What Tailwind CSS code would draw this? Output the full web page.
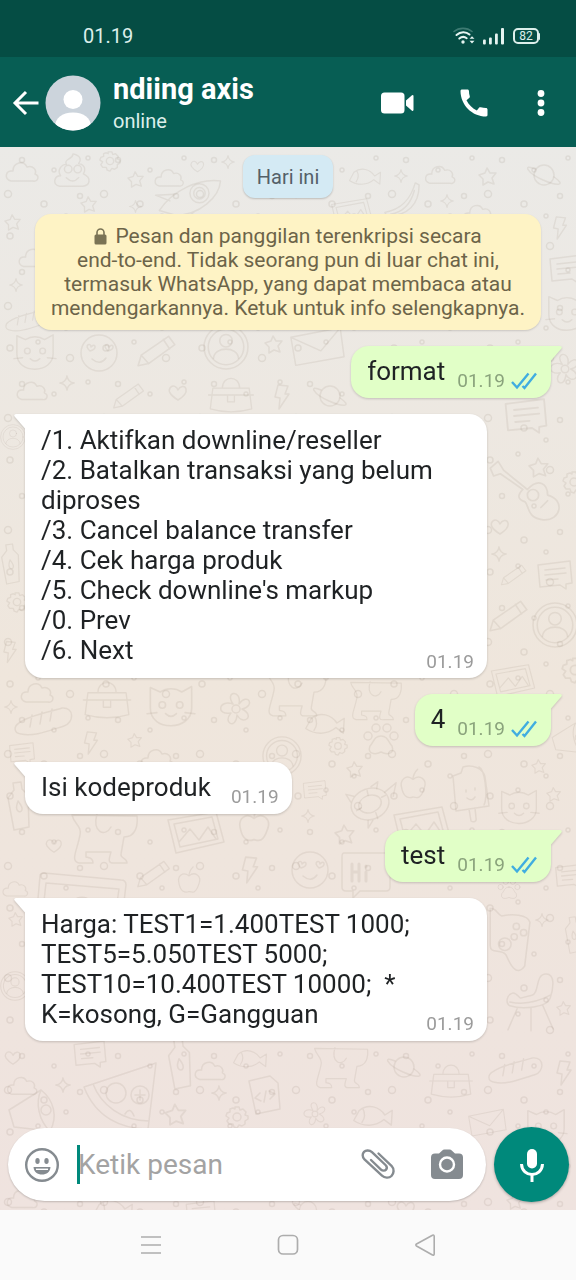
<!DOCTYPE html>
<html lang="id">
<head>
<meta charset="utf-8">
<meta name="viewport" content="width=device-width, initial-scale=1">
<title>ndiing axis</title>
<script src="https://cdn.jsdelivr.net/npm/@tailwindcss/browser@4"></script>
</head>
<body class="flex min-h-screen flex-col bg-[#efe7de] font-[Roboto,'Noto_Sans',sans-serif] text-[#1f2224]">

<!-- Status bar -->
<div class="flex h-[57px] items-end justify-between bg-[#054d44] pr-9 pb-[9px] pl-[83px] text-[#dcefeb]">
  <span class="text-[20px] leading-6">01.19</span>
  <div class="flex items-center gap-2 pb-[3px]">
    <svg class="h-[18px] w-[22px]" viewBox="0 0 22 18" fill="none" stroke="#e6f4f1" stroke-linecap="round" aria-label="Wi-Fi">
      <path d="M1 4.500C6 .3 14 .3 19 4.500" stroke="#3d7a72" stroke-width="1.600"/>
      <path d="M3.500 8C7.500 4.300 13 4.300 16.500 7.500" stroke-width="2"/>
      <path d="M6.300 11.600C8.700 9.500 11.500 9.500 13.700 11.200" stroke-width="2"/>
      <circle cx="10" cy="15" r="1.700" fill="#e6f4f1" stroke="none"/>
      <path d="M16.500 11.800 19 9.200 21.500 11.800ZM16.500 13.800 19 16.400 21.500 13.800Z" fill="#e6f4f1" stroke="none"/>
    </svg>
    <svg class="h-[18px] w-[22px]" viewBox="0 0 22 18" fill="#e6f4f1" aria-label="Sinyal"><rect x="0" y="12.500" width="2.800" height="5" rx="1"/><rect x="6" y="10.500" width="2.800" height="7" rx="1"/><rect x="12" y="6.500" width="2.800" height="11" rx="1"/><rect x="18" y="1" width="3" height="16.500" rx="1"/></svg>
    <div class="flex items-center">
      <span class="flex h-4 w-[26px] items-center justify-center rounded-[5px] border-2 border-[#dcefeb] text-[12px] leading-3">82</span>
      <span class="h-[7px] w-px rounded-r bg-[#dcefeb]"></span>
    </div>
  </div>
</div>

<!-- Conversation header -->
<header class="flex h-[90px] items-center bg-[#075e54] pt-[2px] pr-[23px] pl-3 text-white">
  <button class="flex items-center" aria-label="Kembali">
    <svg class="h-7 w-[28px]" viewBox="0 0 28 28" fill="none" stroke="currentColor" stroke-width="3"><path d="M26.500 14H3.500M14 3 3 14l11 11"/></svg>
  </button>
  <svg class="ml-[5px] size-14 shrink-0" viewBox="0 0 56 56" aria-label="Foto profil">
    <defs><clipPath id="face"><circle cx="28" cy="28" r="27.500"/></clipPath></defs>
    <circle cx="28" cy="28" r="27.500" fill="#ccd4dc"/>
    <g clip-path="url(#face)" fill="#fff"><circle cx="28" cy="24.500" r="9.500"/><path d="M10 52c0-9 7-14.500 18-14.500S46 43 46 52v6H10Z"/></g>
  </svg>
  <div class="ml-3 min-w-0 flex-1">
    <h1 class="truncate text-[29px] leading-8 font-bold">ndiing axis</h1>
    <p class="pt-1 text-[20px] leading-6 text-[#dcefeb]">online</p>
  </div>
  <button aria-label="Panggilan video"><svg class="h-[24px] w-[33px]" viewBox="0 0 33 24" fill="currentColor"><rect x="0" y="1.500" width="23.500" height="21" rx="3.500"/><path d="M25 9.500 31 4.200Q32.500 3.500 32.500 5.500V18.500Q32.500 20.500 31 19.700L25 14.500Z"/></svg></button>
  <button class="ml-[42px]" aria-label="Panggilan suara"><svg class="size-9" viewBox="0 0 24 24" fill="currentColor"><path d="M20.010 15.380c-1.230 0-2.420-.2-3.530-.56-.35-.12-.74-.03-1.010.24l-1.570 1.970c-2.830-1.350-5.480-3.900-6.890-6.830l1.950-1.660c.27-.28.35-.67.240-1.020-.37-1.110-.56-2.300-.56-3.530 0-.54-.45-.99-.99-.99H4.190C3.650 3 3 3.240 3 3.990 3 13.280 10.730 21 20.010 21c.71 0 .99-.63.990-1.180v-3.450c0-.54-.45-.99-.99-.99z"/></svg></button>
  <button class="ml-[37px]" aria-label="Menu lainnya"><svg class="h-8 w-6" viewBox="0 0 24 32" fill="currentColor"><circle cx="12" cy="6.500" r="3.400"/><circle cx="12" cy="16" r="3.400"/><circle cx="12" cy="25.500" r="3.400"/></svg></button>
</header>

<main class="relative isolate flex flex-1 flex-col overflow-hidden bg-linear-to-b from-[#ebeae7] via-[#efe6dc] to-[#efe3df]">
  <!-- Doodle wallpaper -->
  <svg class="absolute inset-0 -z-10 size-full" viewBox="0 147 576 1063" preserveAspectRatio="xMidYMin slice" fill="none" stroke="#7d6a5c" stroke-opacity=".11" stroke-width="1.500" stroke-linejoin="round" stroke-linecap="round" aria-hidden="true">
    <defs>
      <pattern id="dots" width="96" height="112" patternUnits="userSpaceOnUse"><g stroke="#7d6a5c" stroke-opacity=".12" fill="none"><circle cx="10" cy="12" r="3"/><circle cx="38" cy="6" r="2"/><circle cx="70" cy="22" r="3.500"/><circle cx="88" cy="46" r="2"/><circle cx="22" cy="48" r="2.500"/><circle cx="54" cy="58" r="2"/><circle cx="8" cy="82" r="3.500"/><circle cx="44" cy="92" r="3"/><circle cx="80" cy="84" r="2.500"/><circle cx="66" cy="104" r="2"/></g></pattern>
      <symbol id="cloud" viewBox="0 0 36 26" overflow="visible"><path d="M6 22C-1 20 0 11 8 12 8 3 19 1 22 8c6-2 10 3 8 7 5 2 3 8-2 7Z"/></symbol>
      <symbol id="star" viewBox="0 0 20 20" overflow="visible"><path d="m9 2 3 5 6 0-4 5 2 6-6-2-5 3 0-6-4-4 6-2Z"/></symbol>
      <symbol id="spark" viewBox="0 0 20 20" overflow="visible"><path d="M10 2q1 7 8 8-7 1-8 8-1-7-8-8 7-1 8-8Z"/></symbol>
      <symbol id="heart" viewBox="0 0 20 18" overflow="visible"><path d="M10 16C2 11 0 7 2 4c3-4 7-1 8 2 2-4 7-5 8-1 1 4-3 8-8 11Z"/></symbol>
      <symbol id="gear" viewBox="0 0 24 24" overflow="visible"><circle cx="12" cy="12" r="4"/><path d="m10 2 4 0 1 3 3-1 3 3-1 3 3 1 0 3-3 2 0 3-3 2-3-1-2 3-3-1-1-3-4 0-2-3 2-3-3-2 1-3 3-1 0-3 3-1 2 1Z"/></symbol>
      <symbol id="planet" viewBox="0 0 36 28" overflow="visible"><circle cx="18" cy="14" r="10"/><path d="M9 8C-4 2 1 12 17 19s23 5 11-3"/></symbol>
      <symbol id="rocket" viewBox="0 0 76 44" overflow="visible"><path d="M8 34C22 13 49 0 72 3 71 20 50 39 25 39ZM24 17 4 18l15 6M45 35 34 44l-8-5"/><circle cx="50" cy="16" r="10"/><circle cx="50" cy="16" r="6"/></symbol>
      <symbol id="poop" viewBox="0 0 40 40" overflow="visible"><path d="M21 2c10 2 8 8 6 10 8 2 7 8 5 11 9 4 7 13-1 13H7c-8-1-6-11 1-11-4-6 1-12 6-12-3-6 7-5 7-11Z"/><circle cx="16" cy="18" r="4"/><circle cx="26" cy="18" r="4"/><path d="M14 27q7 7 13 0"/></symbol>
      <symbol id="mail" viewBox="0 0 60 44" overflow="visible"><path d="M3 12 54 2l4 30-50 9ZM3 12l31 14L54 2"/></symbol>
      <symbol id="banana" viewBox="0 0 40 40" overflow="visible"><path d="m34 2 4 2c0 20-11 33-34 33l-2-4C20 30 29 19 34 2Zm-1 8C29 25 20 33 8 35"/></symbol>
      <symbol id="note" viewBox="0 0 38 30" overflow="visible"><path d="m2 5 32-4 2 22-6 1 0 5-6-4-20 2ZM9 10l20-2M9 15l21-2M10 20l12-1"/></symbol>
      <symbol id="person" viewBox="0 0 44 44" overflow="visible"><circle cx="22" cy="22" r="21"/><circle cx="22" cy="22" r="17"/><circle cx="22" cy="16" r="6"/><path d="M10 33c1-12 23-12 24 0"/></symbol>
      <symbol id="guitar" viewBox="0 0 64 60" overflow="visible"><path d="m2 7 7-6 5 8 21 17c10-11 18-5 18 5 16 4 12 23-4 22-15-2-12-12-16-16-9-3-5-8-2-11L11 12 5 14Z"/><circle cx="40" cy="31" r="5"/><path d="m47 42 6-6"/></symbol>
      <symbol id="pencil" viewBox="0 0 40 32" overflow="visible"><path d="m2 30 3-10L31 2l6 8-25 18ZM5 20l7 8M26 5l6 9"/></symbol>
      <symbol id="bread" viewBox="0 0 60 32" overflow="visible"><path d="M5 17C15 9 36 6 48 2c13-1 12 15 2 18C34 25 19 31 7 28-1 27 0 20 5 17ZM16 21l2-12M26 18l2-12M36 15l2-12"/></symbol>
      <symbol id="flower" viewBox="0 0 36 36" overflow="visible"><circle cx="18" cy="18" r="4"/><path d="M15 13c-9-13 9-15 6 0 9-12 17 2 3 5 14 7 1 17-5 6-1 15-15 8-6-2-15 3-13-14 2-9Z"/></symbol>
      <symbol id="dog" viewBox="0 0 66 54" overflow="visible"><path d="M3 3c2 9 10 11 8 20-3 16-10 26-1 28h14c0-5-3-5-7-6l0-5 25 0c-2 7-4 12 4 11h12c0-6-7-4-6-9l3-17c12 0 14-12 13-21ZM28 2c-5 18 8 24 14 13"/></symbol>
      <symbol id="photo" viewBox="0 0 60 44" overflow="visible"><path d="M2 9 50 1l8 30-48 11ZM8 13l38-7 6 22-38 8ZM13 31l11-13 9 11 9-13 8 12"/></symbol>
      <symbol id="bottle" viewBox="0 0 24 50" overflow="visible"><path d="m7 2 8-1 1 7 6 6 1 32-15 3L2 17l6-8ZM12 20c8 10 2 12 0 10s-2-4 0-10Z"/></symbol>
      <symbol id="apple" viewBox="0 0 28 34" overflow="visible"><path d="M14 12c7-6 16 0 12 10-4 12-8 10-12 9-5 2-10 0-12-9-3-10 5-16 12-10Zm0 0q0-6 5-11"/></symbol>
      <symbol id="board" viewBox="0 0 92 40" overflow="visible"><path d="M2 38 5 4q0-3 4-3l77 7q5 0 5 5l-3 25M8 38l3-27 73 6-3 21M35 38c1-17 23-17 24 0"/></symbol>
      <symbol id="turtle" viewBox="0 0 56 50" overflow="visible"><ellipse cx="27" cy="25" rx="20" ry="16" transform="rotate(-20 27 25)"/><ellipse cx="27" cy="25" rx="12" ry="9" transform="rotate(-20 27 25)"/><path d="m42 13 12-10-3 14M10 17 2 15l5 8M25 42l0 8 5-8M34 9l1-7-7 5M13 32l5-3M39 18l4-2M24 11l1 5M33 34l2 6"/></symbol>
      <symbol id="ice" viewBox="0 0 40 60" overflow="visible"><path d="m2 12 8-3 2-6c9-3 20 1 22 10l4 29-33 5ZM28 3c6 2 9 30 5 38M18 45l2 12c3 2 6 0 5-3l-1-10M15 26v2M24 24v2M16 34q5 4 8-1"/></symbol>
      <symbol id="smile" viewBox="0 0 38 38" overflow="visible"><circle cx="19" cy="19" r="18"/><path d="M10 17c-7-6 1-9 1-4 4-5 7 2-1 4ZM28 17c-7-6 1-9 1-4 4-5 7 2-1 4ZM12 25q8 7 14-1"/></symbol>
      <symbol id="pad" viewBox="0 0 44 64" overflow="visible"><path d="M4 2c6-1 6 5 11 7 9-2 25-2 27 6l-5 42c-8 11-14-2-18-11-5-6-15 0-15-9Z"/><circle cx="18" cy="36" r="6"/><circle cx="29" cy="19" r="3"/><circle cx="36" cy="25" r="3"/><circle cx="27" cy="29" r="3"/></symbol>
      <symbol id="chair" viewBox="0 0 52 64" overflow="visible"><path d="M6 24c4-2 7 4 9 5l12-3c8-2 3-21 14-22 11-1 8 16 5 25-3 10-29 12-42 8-5-3-3-11 2-13ZM12 39 2 62M26 39l0 24M38 36l11 25M4 33c14 3 29 0 42-7"/></symbol>
      <symbol id="pizza" viewBox="0 0 76 70" overflow="visible"><path d="M2 26 74 2 66 68C40 68 14 57 2 26ZM11 23C19 44 40 60 67 60"/><circle cx="34" cy="32" r="10"/><circle cx="58" cy="34" r="9"/><path d="M58 29v10M53 34h10M43 53q5-8 9 2"/></symbol>
      <symbol id="code" viewBox="0 0 34 40" overflow="visible"><path d="m2 6 21-5 8 7 2 26-24 5ZM13 18l-5 5 6 3M22 16l6 3-5 5M19 16l-2 11"/></symbol>
      <symbol id="cat" viewBox="0 0 46 44" overflow="visible"><path d="M4 6 13 10c6-4 14-4 20 0l9-5 0 20c0 21-38 22-38 0Z"/><circle cx="15" cy="22" r="3"/><circle cx="31" cy="22" r="3"/><path d="M18 30q5 5 10 0M1 30l9-1M36 29l9 1"/></symbol>
      <symbol id="bag" viewBox="0 0 56 44" overflow="visible"><path d="M7 14h42l3 24q-24 7-48 0ZM18 14c0-15 20-15 20 0M2 22h52M24 22v8h8v-8"/></symbol>
      <symbol id="bolt" viewBox="0 0 16 26" overflow="visible"><path d="m4 1 10 1-3 8 4 0L5 25l1-11-5-1Z"/></symbol>
      <symbol id="horn" viewBox="0 0 50 48" overflow="visible"><path d="M3 22 35 2c13 10 17 27 9 41L8 39ZM35 2c-6 13-2 31 9 41"/><circle cx="40" cy="22" r="5"/></symbol>
      <symbol id="paw" viewBox="0 0 36 34" overflow="visible"><circle cx="5" cy="14" r="4"/><circle cx="13" cy="6" r="4"/><circle cx="24" cy="6" r="4"/><circle cx="31" cy="14" r="4"/><path d="M18 14c7 0 7 6 11 10 3 8-5 9-11 6-6 3-14 2-11-6 4-4 4-10 11-10Z"/></symbol>
      <symbol id="fish" viewBox="0 0 46 24" overflow="visible"><path d="M2 18 8 7C18-1 30 3 36 12l8-5-1 16-8-6C26 25 12 25 2 18ZM12 5q4 8-1 15"/></symbol>
    </defs>
    <rect x="0" y="147" width="576" height="1063" fill="url(#dots)" stroke="none"/>
    <use href="#cloud" x="5" y="159" width="36" height="26"/><use href="#poop" x="52" y="152" width="40" height="38"/><use href="#gear" x="99" y="150" width="22" height="22"/><use href="#star" x="127" y="170" width="18" height="18"/><use href="#cloud" x="154" y="166" width="32" height="24"/><use href="#heart" x="190" y="159" width="15" height="15"/><use href="#rocket" x="150" y="178" width="76" height="42"/><use href="#spark" x="220" y="154" width="16" height="16"/><use href="#star" x="80" y="195" width="18" height="18"/><use href="#star" x="4" y="213" width="18" height="18"/><use href="#spark" x="128" y="199" width="15" height="15"/>
    <use href="#fish" x="348" y="164" width="34" height="24"/><use href="#spark" x="393" y="168" width="16" height="16"/><use href="#cloud" x="424" y="163" width="34" height="24"/><use href="#star" x="478" y="166" width="20" height="20"/><use href="#planet" x="526" y="161" width="36" height="28"/><use href="#banana" x="382" y="181" width="40" height="38"/><use href="#spark" x="439" y="193" width="16" height="16"/><use href="#photo" x="326" y="198" width="52" height="32"/><use href="#cloud" x="462" y="202" width="34" height="24"/><use href="#bolt" x="551" y="216" width="18" height="24"/>
    <use href="#cloud" x="18" y="245" width="34" height="26"/><use href="#spark" x="8" y="277" width="16" height="16"/><use href="#bread" x="5" y="302" width="46" height="38"/><use href="#note" x="548" y="252" width="38" height="34"/><use href="#cat" x="545" y="288" width="44" height="48"/><use href="#cat" x="12" y="330" width="46" height="42"/><use href="#smile" x="80" y="334" width="38" height="38"/><use href="#pencil" x="136" y="334" width="42" height="34"/><use href="#person" x="203" y="324" width="46" height="46"/><use href="#star" x="264" y="334" width="20" height="20"/><use href="#mail" x="288" y="325" width="58" height="44"/><use href="#flower" x="548" y="352" width="34" height="34"/>
    <use href="#spark" x="58" y="374" width="18" height="18"/><use href="#cloud" x="16" y="378" width="34" height="26"/><use href="#pencil" x="112" y="382" width="34" height="28"/><use href="#heart" x="168" y="384" width="20" height="18"/><use href="#bag" x="206" y="376" width="50" height="38"/><use href="#bolt" x="274" y="384" width="16" height="26"/><use href="#planet" x="312" y="382" width="36" height="28"/>
    <use href="#person" x="0" y="424" width="26" height="26"/><use href="#bottle" x="0" y="540" width="20" height="48"/><use href="#gear" x="6" y="590" width="22" height="24"/><use href="#bolt" x="3" y="640" width="14" height="24"/><use href="#note" x="500" y="398" width="52" height="36"/><use href="#star" x="528" y="456" width="22" height="22"/><use href="#guitar" x="488" y="460" width="72" height="68"/><use href="#gear" x="562" y="468" width="24" height="28"/><use href="#heart" x="490" y="516" width="20" height="22"/><use href="#spark" x="490" y="545" width="18" height="18"/><use href="#pencil" x="500" y="562" width="28" height="26"/><use href="#note" x="536" y="560" width="38" height="30"/><use href="#pencil" x="488" y="598" width="42" height="36"/><use href="#person" x="532" y="602" width="46" height="46"/><use href="#photo" x="482" y="664" width="62" height="34"/><use href="#gear" x="561" y="654" width="28" height="32"/>
    <use href="#cloud" x="20" y="680" width="36" height="26"/><use href="#bag" x="80" y="680" width="54" height="40"/><use href="#cat" x="146" y="678" width="50" height="54"/><use href="#bread" x="14" y="706" width="60" height="32"/><use href="#flower" x="218" y="690" width="36" height="38"/><use href="#dog" x="264" y="668" width="60" height="52"/><use href="#dog" x="340" y="680" width="68" height="42"/><use href="#fish" x="302" y="712" width="46" height="22"/><use href="#paw" x="362" y="722" width="38" height="34"/><use href="#gear" x="328" y="736" width="20" height="20"/><use href="#spark" x="3" y="698" width="16" height="18"/><use href="#bolt" x="83" y="731" width="16" height="24"/><use href="#star" x="126" y="732" width="18" height="16"/><use href="#note" x="8" y="742" width="28" height="22"/><use href="#cloud" x="140" y="746" width="36" height="26"/><use href="#person" x="262" y="736" width="40" height="40"/><use href="#horn" x="550" y="718" width="36" height="42"/>
    <use href="#bottle" x="6" y="781" width="24" height="50"/><use href="#dog" x="65" y="812" width="74" height="54"/><use href="#photo" x="166" y="810" width="60" height="46"/><use href="#apple" x="238" y="805" width="32" height="38"/><use href="#heart" x="44" y="838" width="20" height="16"/><use href="#pencil" x="136" y="858" width="36" height="32"/><use href="#apple" x="175" y="866" width="28" height="28"/><use href="#board" x="34" y="872" width="94" height="40"/><use href="#cloud" x="2" y="876" width="28" height="26"/><use href="#bolt" x="240" y="856" width="20" height="28"/><use href="#note" x="298" y="780" width="34" height="20"/><use href="#star" x="346" y="760" width="18" height="18"/><use href="#turtle" x="344" y="778" width="54" height="52"/><use href="#apple" x="400" y="758" width="26" height="52"/><use href="#ice" x="450" y="764" width="42" height="60"/><use href="#cat" x="498" y="784" width="42" height="44"/><use href="#star" x="530" y="758" width="18" height="16"/><use href="#star" x="546" y="786" width="16" height="16"/><use href="#spark" x="300" y="808" width="16" height="16"/><use href="#star" x="334" y="822" width="22" height="24"/><use href="#photo" x="392" y="806" width="60" height="44"/><use href="#smile" x="291" y="851" width="38" height="38"/><use href="#note" x="554" y="862" width="32" height="28"/>
    <path d="M344 853h42q4 0 4 4v30q0 4-4 4h-26l-7 7v-7h-7q-4 0-4-4v-30q0-4 2-4Z"/><path d="M352 864v17m7-17v17m-7-9h7m7 0v9m0-15v1" stroke-width="3"/>
    <use href="#star" x="8" y="910" width="16" height="18"/><use href="#person" x="0" y="968" width="30" height="36"/><use href="#paw" x="494" y="878" width="30" height="22"/><use href="#pad" x="486" y="904" width="46" height="72"/><use href="#spark" x="534" y="912" width="16" height="16"/><use href="#bottle" x="562" y="916" width="22" height="38"/><use href="#chair" x="506" y="968" width="50" height="66"/><use href="#star" x="556" y="1000" width="16" height="16"/>
    <use href="#note" x="58" y="1040" width="64" height="28"/><use href="#bottle" x="162" y="1038" width="34" height="52"/><use href="#cloud" x="194" y="1058" width="34" height="26"/><use href="#fish" x="232" y="1046" width="36" height="24"/><use href="#heart" x="4" y="1050" width="18" height="16"/><use href="#cloud" x="6" y="1074" width="34" height="24"/><use href="#spark" x="54" y="1076" width="18" height="18"/><use href="#pizza" x="82" y="1060" width="76" height="72"/><use href="#spark" x="210" y="1084" width="18" height="18"/><use href="#code" x="247" y="1074" width="34" height="42"/><use href="#horn" x="6" y="1088" width="50" height="48"/><use href="#star" x="164" y="1102" width="24" height="24"/><use href="#gear" x="225" y="1105" width="24" height="24"/><use href="#flower" x="302" y="1100" width="26" height="28"/><use href="#fish" x="350" y="1104" width="46" height="22"/><use href="#dog" x="306" y="1046" width="66" height="44"/><use href="#planet" x="386" y="1052" width="36" height="30"/><use href="#bag" x="428" y="1062" width="46" height="38"/><use href="#mail" x="466" y="1108" width="42" height="30"/><use href="#cat" x="524" y="1104" width="44" height="44"/><use href="#bread" x="486" y="1056" width="60" height="30"/><use href="#bolt" x="556" y="1060" width="16" height="26"/>
    <use href="#cloud" x="6" y="1186" width="34" height="26"/><use href="#fish" x="90" y="1198" width="46" height="22"/><use href="#note" x="182" y="1200" width="38" height="26"/><use href="#planet" x="290" y="1198" width="36" height="24"/><use href="#star" x="506" y="1192" width="18" height="18"/><use href="#heart" x="396" y="1200" width="20" height="18"/>
  </svg>

  <div class="flex flex-1 flex-col gap-4 px-[25px] pt-2">
    <div class="flex h-[43px] items-center self-center rounded-xl bg-[#d4eaf4] px-[14px] text-[20px] text-[#546068] shadow-[0_1px_2px_rgba(0,0,0,0.2)]">Hari ini</div>
    <p class="mx-[10px] rounded-2xl bg-[#fef3c5] px-3 py-[10px] text-center text-[21px] leading-6 text-[#6c6449] shadow-[0_1px_2px_rgba(0,0,0,0.15)]"><svg class="mr-2 inline-block h-[17px] w-[13px] align-[-2px]" viewBox="0 0 13 17" aria-hidden="true"><rect x=".5" y="6.500" width="12" height="10" rx="1.500" fill="#7a7355"/><path d="M3 7V4.500a3.500 3.500 0 0 1 7 0V7" fill="none" stroke="#7a7355" stroke-width="1.600"/></svg>Pesan dan panggilan terenkripsi secara<br>end-to-end. Tidak seorang pun di luar chat ini, termasuk WhatsApp, yang dapat membaca atau mendengarkannya. Ketuk untuk info selengkapnya.</p>

    <div class="relative flex items-end gap-3 self-end rounded-[18px] rounded-tr-none bg-[#e1ffc7] pt-[10px] pr-[14px] pb-[12px] pl-4 drop-shadow-[0_1px_1px_rgba(0,0,0,0.18)]">
      <svg class="absolute top-0 -right-[11px] h-4 w-3" viewBox="0 0 12 16" fill="#e1ffc7" aria-hidden="true"><path d="M0 0H10Q13 .3 11 3L1 14.500H0Z"/></svg>
      <p class="text-[26px] leading-[30px]">format</p>
      <span class="-mb-[6px] flex items-center gap-[6px] text-[19px] leading-[22px] text-[#8aa37c]">01.19 <svg class="h-[18px] w-[26px]" viewBox="0 0 26 18" fill="none" stroke="#41ade0" stroke-width="2.400" aria-label="Dibaca"><path d="m1 10 5 5.500L17.500 1.500M11.500 14l2 2L25 1.500"/></svg></span>
    </div>

    <div class="relative grid w-[462px] max-w-full rounded-[18px] rounded-tl-none bg-white pt-[11px] pr-[13px] pb-[13px] pl-4 drop-shadow-[0_1px_1px_rgba(0,0,0,0.18)]">
      <svg class="absolute top-0 -left-[11px] h-4 w-3" viewBox="0 0 12 16" fill="#fff" aria-hidden="true"><path d="M12 0H2Q-1 .3 1 3L11 14.500H12Z"/></svg>
      <p class="col-start-1 row-start-1 text-[26px] leading-[30px]">/1. Aktifkan downline/reseller<br>/2. Batalkan transaksi yang belum diproses<br>/3. Cancel balance transfer<br>/4. Cek harga produk<br>/5. Check downline's markup<br>/0. Prev<br>/6. Next</p>
      <span class="col-start-1 row-start-1 -mb-2 self-end justify-self-end text-[19px] leading-[22px] text-[#9b9b9b]">01.19</span>
    </div>

    <div class="relative flex items-end gap-3 self-end rounded-[18px] rounded-tr-none bg-[#e1ffc7] pt-[10px] pr-[14px] pb-[12px] pl-4 drop-shadow-[0_1px_1px_rgba(0,0,0,0.18)]">
      <svg class="absolute top-0 -right-[11px] h-4 w-3" viewBox="0 0 12 16" fill="#e1ffc7" aria-hidden="true"><path d="M0 0H10Q13 .3 11 3L1 14.500H0Z"/></svg>
      <p class="text-[26px] leading-[30px]">4</p>
      <span class="-mb-[6px] flex items-center gap-[6px] text-[19px] leading-[22px] text-[#8aa37c]">01.19 <svg class="h-[18px] w-[26px]" viewBox="0 0 26 18" fill="none" stroke="#41ade0" stroke-width="2.400" aria-label="Dibaca"><path d="m1 10 5 5.500L17.500 1.500M11.500 14l2 2L25 1.500"/></svg></span>
    </div>

    <div class="relative flex items-end gap-5 self-start rounded-[18px] rounded-tl-none bg-white pt-[10px] pr-[13px] pb-[12px] pl-4 drop-shadow-[0_1px_1px_rgba(0,0,0,0.18)]">
      <svg class="absolute top-0 -left-[11px] h-4 w-3" viewBox="0 0 12 16" fill="#fff" aria-hidden="true"><path d="M12 0H2Q-1 .3 1 3L11 14.500H12Z"/></svg>
      <p class="text-[26px] leading-[30px]">Isi kodeproduk</p>
      <span class="-mb-[6px] text-[19px] leading-[22px] text-[#9b9b9b]">01.19</span>
    </div>

    <div class="relative flex items-end gap-3 self-end rounded-[18px] rounded-tr-none bg-[#e1ffc7] pt-[10px] pr-[14px] pb-[12px] pl-4 drop-shadow-[0_1px_1px_rgba(0,0,0,0.18)]">
      <svg class="absolute top-0 -right-[11px] h-4 w-3" viewBox="0 0 12 16" fill="#e1ffc7" aria-hidden="true"><path d="M0 0H10Q13 .3 11 3L1 14.500H0Z"/></svg>
      <p class="text-[26px] leading-[30px]">test</p>
      <span class="-mb-[6px] flex items-center gap-[6px] text-[19px] leading-[22px] text-[#8aa37c]">01.19 <svg class="h-[18px] w-[26px]" viewBox="0 0 26 18" fill="none" stroke="#41ade0" stroke-width="2.400" aria-label="Dibaca"><path d="m1 10 5 5.500L17.500 1.500M11.500 14l2 2L25 1.500"/></svg></span>
    </div>

    <div class="relative grid w-[462px] max-w-full rounded-[18px] rounded-tl-none bg-white pt-[11px] pr-[13px] pb-[12px] pl-4 drop-shadow-[0_1px_1px_rgba(0,0,0,0.18)]">
      <svg class="absolute top-0 -left-[11px] h-4 w-3" viewBox="0 0 12 16" fill="#fff" aria-hidden="true"><path d="M12 0H2Q-1 .3 1 3L11 14.500H12Z"/></svg>
      <p class="col-start-1 row-start-1 text-[26px] leading-[30px] whitespace-pre-wrap">Harga: TEST1=1.400TEST 1000; TEST5=5.050TEST 5000; TEST10=10.400TEST 10000;  * K=kosong, G=Gangguan</p>
      <span class="col-start-1 row-start-1 -mb-[6px] self-end justify-self-end text-[19px] leading-[22px] text-[#9b9b9b]">01.19</span>
    </div>
  </div>

  <!-- Composer -->
  <form class="flex items-center gap-2 pt-4 pr-[7px] pb-2 pl-2">
    <div class="flex h-[73px] min-w-0 flex-1 items-center rounded-full bg-white pr-[22px] pl-4 text-[#858b90] shadow-[0_1px_2px_rgba(0,0,0,0.2)]">
      <button type="button" aria-label="Emoji"><svg class="size-9" viewBox="0 0 36 36" fill="none" stroke="currentColor" stroke-width="2.400"><circle cx="18" cy="18" r="15.800"/><ellipse cx="13.500" cy="14" rx="2.200" ry="3" fill="currentColor" stroke="none"/><ellipse cx="22.500" cy="14" rx="2.200" ry="3" fill="currentColor" stroke="none"/><path d="M9.500 20H26.500C26 25.500 22.500 27.500 18 27.500S10 25.500 9.500 20Z" fill="currentColor" stroke="none"/><path d="M12 22.300H24" stroke="#fff" stroke-width="1.400"/></svg></button>
      <label class="ml-[17px] flex h-[39px] min-w-0 flex-1 items-center border-l-[3px] border-[#00897b]">
        <input type="text" aria-label="Ketik pesan" placeholder="Ketik pesan" class="-ml-[2px] w-full bg-transparent text-[28px] leading-8 text-[#1f2224] outline-none placeholder:text-[#a3a3a3]">
      </label>
      <button type="button" aria-label="Lampirkan"><svg class="size-9" viewBox="0 0 36 36" fill="none" stroke="currentColor" stroke-width="2.400" stroke-linecap="round"><path d="M18.500 6.500 31.500 18.800C34.500 22 34 26.500 31.500 29S24.500 31 22 28.700L4.500 12.500C2 10 2.300 6.500 4 4.800S9.500 3 12 5.200L25.500 18C27 19.500 27 21.500 26 22.700S22.500 24 21 22.600L11 13"/></svg></button>
      <button type="button" class="ml-[34px]" aria-label="Kamera"><svg class="h-[32px] w-[34px]" viewBox="0 0 34 32"><path d="M5 4.500H9L12 1.700Q13 .5 14.500 .5H19.500Q21 .5 22 1.700L25 4.500H29Q33 4.500 33 8.500V26Q33 30 29 30H5Q1 30 1 26V8.500Q1 4.500 5 4.500Z" fill="currentColor"/><circle cx="17" cy="15.500" r="7" fill="none" stroke="#fff" stroke-width="2.400"/></svg></button>
    </div>
    <button type="button" class="flex size-[75px] shrink-0 items-center justify-center rounded-full bg-[#00897b] shadow-[0_1px_3px_rgba(0,0,0,0.3)]" aria-label="Rekam suara"><svg class="h-9 w-[26px]" viewBox="0 0 26 36" fill="none" stroke="#fff" stroke-width="3"><rect x="8" y="2" width="10" height="19.500" rx="5" fill="#fff" stroke="none"/><path d="M2.500 17C3 31 23 31 23.500 17M13 27v8"/></svg></button>
  </form>
</main>

<!-- Android navigation -->
<nav class="flex h-[70px] items-center justify-center gap-[116px] bg-[#fafafa] text-[#adadad]">
  <button aria-label="Aplikasi terbaru"><svg class="h-[22px] w-5" viewBox="0 0 20 22" stroke="currentColor" stroke-width="1.700"><path d="M0 3H20M0 11H20M0 19H20"/></svg></button>
  <button aria-label="Beranda"><svg class="h-[22px] w-[22px]" viewBox="0 0 22 22" fill="none" stroke="currentColor" stroke-width="1.700"><rect x="1.500" y="1.500" width="19" height="18.500" rx="4.500"/></svg></button>
  <button aria-label="Kembali ke sebelumnya"><svg class="h-[22px] w-5" viewBox="0 0 20 22" fill="none" stroke="currentColor" stroke-width="1.600" stroke-linejoin="round"><path d="M17.500 1.200 1.500 10Q.2 11 1.500 12L17.500 21Q19.200 21.500 19.200 20V2.200Q19 .6 17.500 1.200Z"/></svg></button>
</nav>
</body>
</html>
